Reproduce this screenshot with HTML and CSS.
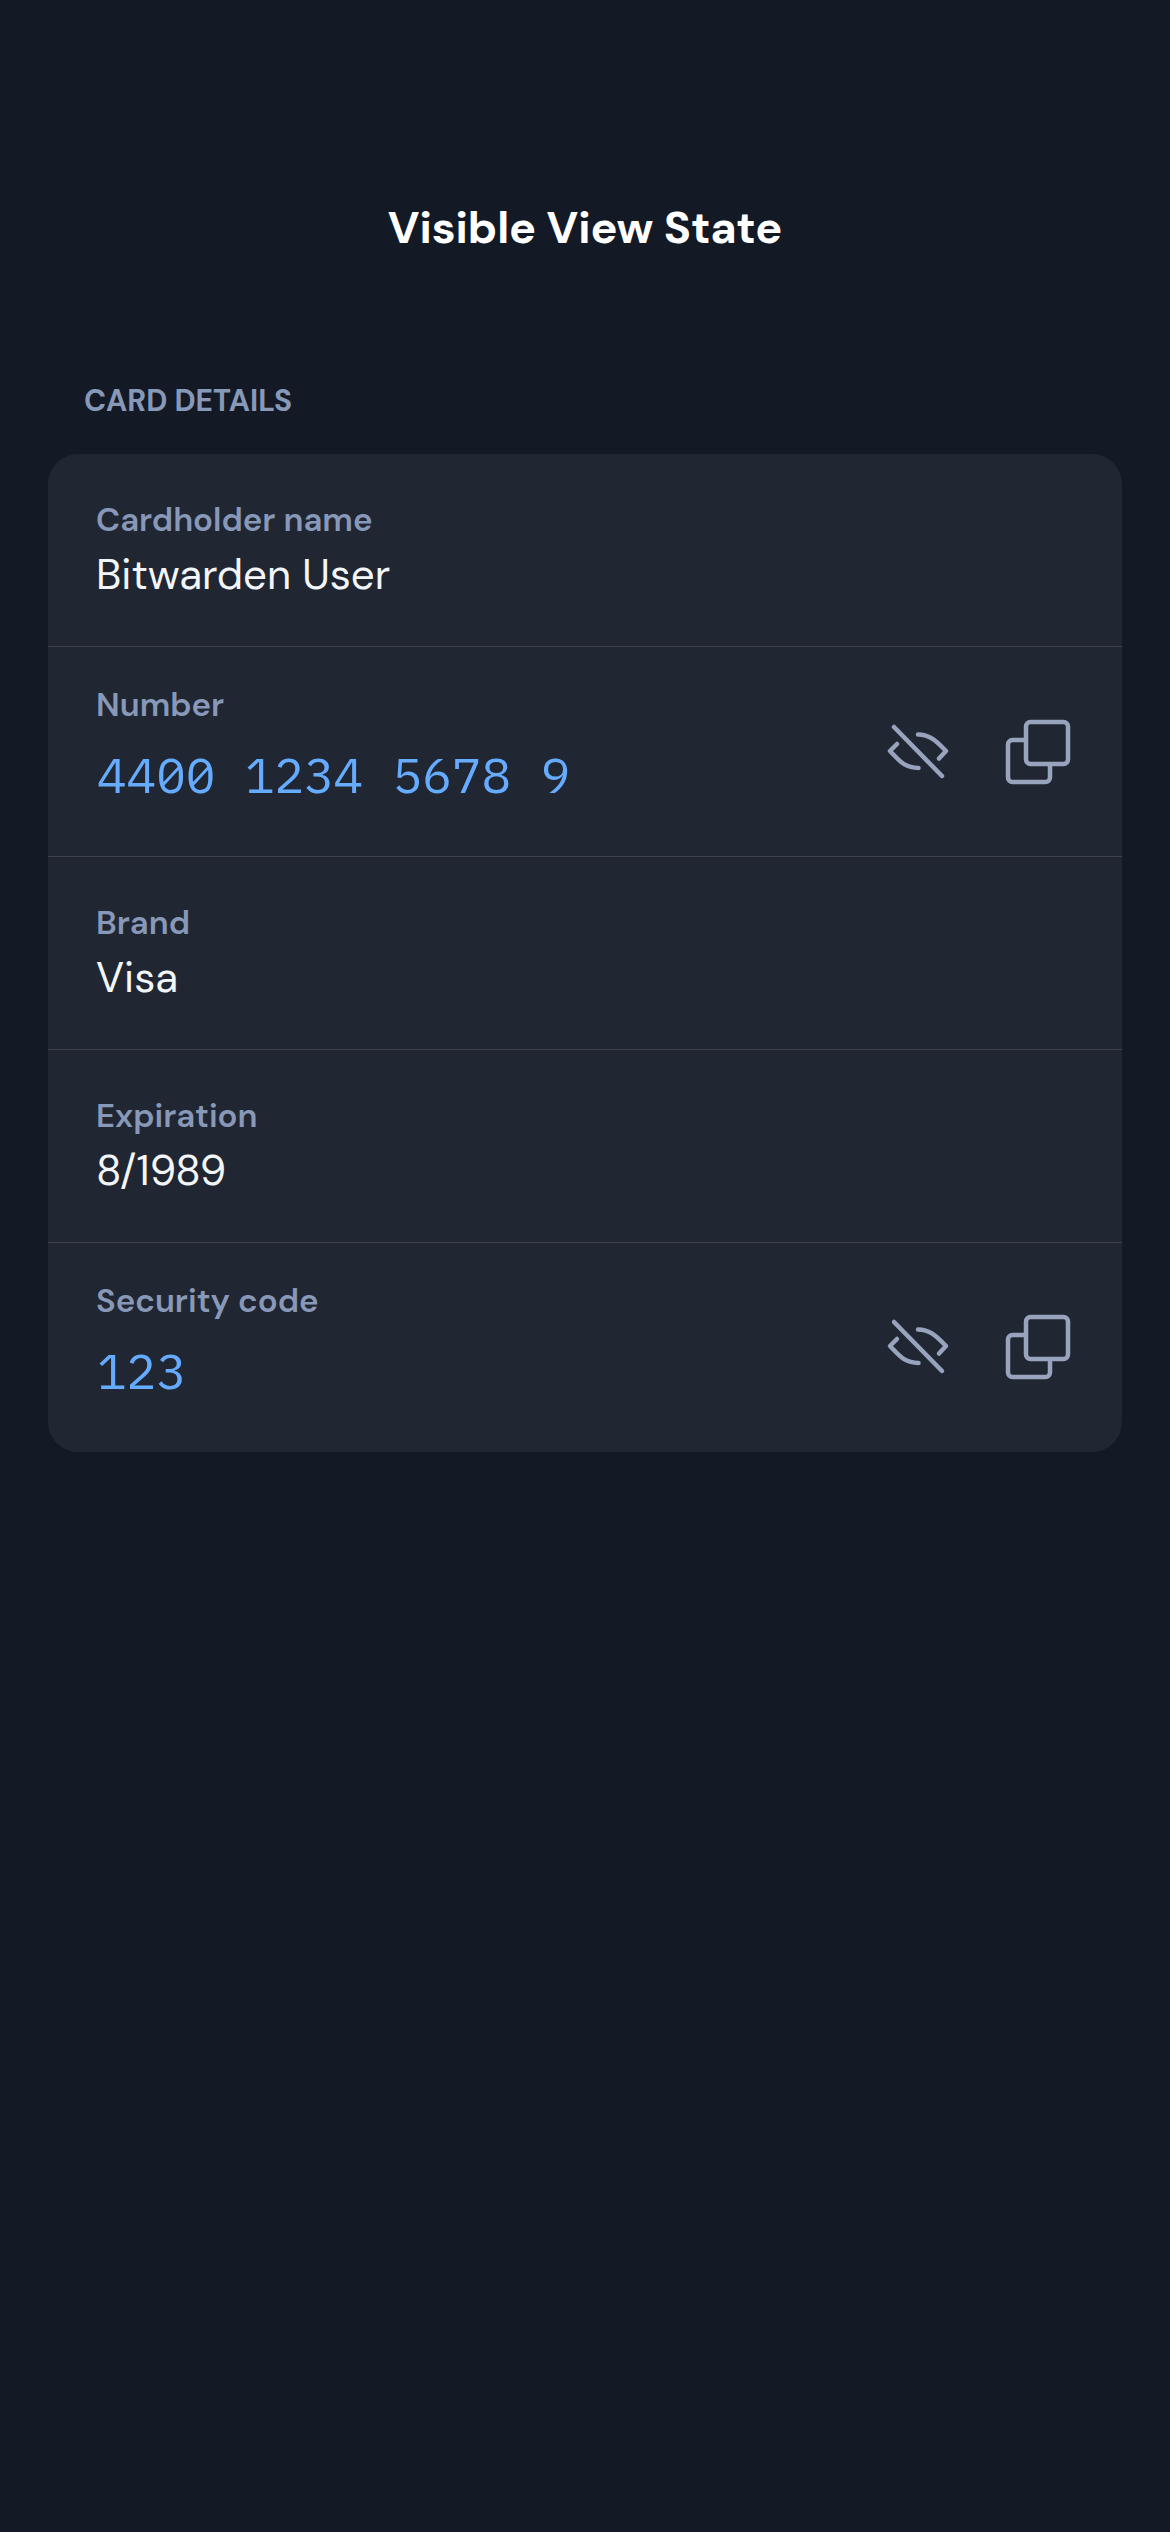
FILE: index.html
```html
<!DOCTYPE html>
<html lang="en">
<head>
<meta charset="utf-8">
<title>Visible View State</title>
<link rel="stylesheet" href="styles.css">
</head>
<body>
<svg class="sprite" aria-hidden="true">
  <symbol id="hide" viewBox="0 0 64 56"><path d="M6 4 54 53M9 21l-7 7c9 9 14 17 28.500 17M30 11.500C43 11.500 50 20 58 28l-7 7.500"/></symbol>
  <symbol id="copy" viewBox="0 0 64 64"><rect x="20" y="2" width="42" height="42" rx="4.500"/><path d="M20 20H6.500A4.500 4.500 0 0 0 2 24.500v33A4.500 4.500 0 0 0 6.500 62h33a4.500 4.500 0 0 0 4.500-4.500V44"/></symbol>
</svg>
<main class="screen">
  <h1 class="title">Visible View State</h1>
  <h2 class="section-title">CARD DETAILS</h2>
  <section class="card">
    <div class="row">
      <div class="field"><div class="label">Cardholder name</div><div class="value">Bitwarden User</div></div>
    </div>
    <div class="row row-number">
      <div class="field"><div class="label">Number</div><div class="code">4400 1234 5678 9</div></div>
      <div class="actions"><svg class="icon-hide"><use href="#hide"/></svg><svg class="icon-copy"><use href="#copy"/></svg></div>
    </div>
    <div class="row">
      <div class="field"><div class="label">Brand</div><div class="value">Visa</div></div>
    </div>
    <div class="row">
      <div class="field"><div class="label">Expiration</div><div class="value">8/1989</div></div>
    </div>
    <div class="row row-security">
      <div class="field"><div class="label">Security code</div><div class="code">123</div></div>
      <div class="actions"><svg class="icon-hide"><use href="#hide"/></svg><svg class="icon-copy"><use href="#copy"/></svg></div>
    </div>
  </section>
</main>
</body>
</html>
```
FILE: styles.css
```css
* { box-sizing: border-box; }
body { margin: 0; background: #131a26; font-family: "DM Sans", Lato, sans-serif; }
.sprite { display: none; }
.screen { min-height: 2532px; padding: 198px 48px 0; }
.title { margin: 0; height: 60px; line-height: 60px; font-size: 45px; font-weight: 700; letter-spacing: -.1px; color: #fff; text-align: center; }
.section-title { margin: 123px 0 33px; padding-left: 36px; height: 40px; line-height: 40px; font-size: 30px; font-weight: 700; color: #8898b8; }
.card { overflow: hidden; border-radius: 30px; background: #212732; }
.row { display: flex; justify-content: space-between; height: 193px; padding: 44px 52px 0 48px; border-bottom: 1px solid #3c414a; }
.row-number { height: 210px; padding-top: 36px; }
.row-security { height: 209px; padding-top: 36px; border-bottom: 0; }
.label { height: 44px; line-height: 44px; font-size: 33px; font-weight: 600; color: #8898b8; }
.value { height: 56px; line-height: 56px; margin-top: 5px; font-size: 42px; color: #f3f6f9; }
.code { margin-top: 18px; padding-left: 1px; font: 49.300px/60px "IBM Plex Mono", "Liberation Mono", monospace; font-feature-settings: "zero"; color: #65abff; }
.actions { display: flex; gap: 54px; margin-top: 37px; }
.row-security .actions { margin-top: 36px; }
.actions svg { fill: none; stroke: #98a3bd; stroke-width: 4.500; stroke-linecap: round; stroke-linejoin: round; overflow: visible; }
.actions symbol { overflow: visible; }
.icon-hide { width: 64px; height: 56px; margin-top: 3px; }
.icon-copy { width: 64px; height: 64px; }
#hide, #copy { overflow: visible; }
```
